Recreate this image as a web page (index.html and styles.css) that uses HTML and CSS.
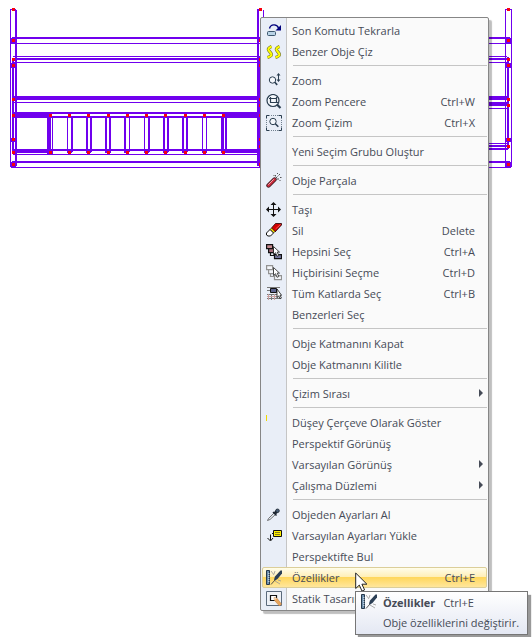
FILE: index.html
```html
<!DOCTYPE html>
<html lang="tr">
<head>
  <meta charset="UTF-8">
  <title>Obje Menüsü</title>
  <link rel="stylesheet" href="styles.css">
</head>
<body>
  <main class="workspace">
    <svg class="drawing" width="532" height="180" viewBox="0 0 532 180" aria-hidden="true">
      <!-- horizontal beams -->
      <g class="beams">
        <path d="M12 37h498v2H12zM12 43h498v1H12zM13 56h494v1H13zM13 58h495v2H13zM13 62h494v1H13z"/>
        <path d="M13 96h495v4H13zM13 102h248v1H13zM489 102h19v4h-19zM489 108h19v1h-19z"/>
        <path d="M13 112h248v2H13zM13 116h248v2H13zM13 112h38v6H13zM225 112h36v6h-36z"/>
        <path d="M13 149h248v2H13zM13 154h248v1H13zM13 149h38v4H13zM225 149h36v4h-36z"/>
        <path d="M489 143h19v1h-19zM489 145h19v2h-19zM489 148h19v2h-19z"/>
        <path d="M12 161h498v2H12zM11 167h500v1H11z"/>
      </g>
      <!-- posts -->
      <g class="beams">
        <path d="M10 9h1v158h-1zM10 9h6v1h-6zM15 10h2v156h-2zM12 60h2v92h-2z"/>
        <path d="M257 9h2v157h-2zM257 9h5v1h-5zM263 10h1v10h-1zM259 56h2v112h-2z"/>
        <path d="M505 9h1v158h-1zM505 9h7v1h-7zM511 10h1v157h-1zM507 57h2v92h-2z"/>
        <path d="M11 38h5v6h-5zM11 63h5v5h-5zM11 138h5v4h-5zM11 162h5v5h-5z"/>
        <path d="M506 38h5v6h-5zM506 63h5v5h-5zM506 138h5v4h-5zM506 162h5v5h-5z"/>
      </g>
      <!-- balusters -->
      <g class="beams">
        <path d="M47 116h4v38h-4zM52 116h1v38h-1zM67 116h1v36h-1zM71 116h2v36h-2zM86 116h2v36h-2zM90 116h2v36h-2z"/>
        <path d="M105 116h2v36h-2zM109 116h2v36h-2zM124 116h2v36h-2zM129 116h1v36h-1zM144 116h1v36h-1zM148 116h2v36h-2z"/>
        <path d="M163 116h2v36h-2zM167 116h2v36h-2zM182 116h2v36h-2zM186 116h2v36h-2zM202 116h1v36h-1zM206 116h1v36h-1z"/>
        <path d="M221 116h3v36h-3zM225 116h2v36h-2z"/>
        <path d="M67 151h5v2h-5zM86 151h5v2h-5zM105 151h6v2h-6zM124 151h5v2h-5zM144 151h5v2h-5zM163 151h5v2h-5zM182 151h5v2h-5zM202 151h5v2h-5zM221 151h5v2h-5z"/>
      </g>
      <!-- nodes -->
      <g class="nodes">
        <path d="M12 8h3v3h-3zM12 39h3v3h-3zM12 58h3v3h-3zM12 64h3v3h-3zM12 98h3v3h-3zM12 114h3v3h-3zM12 138h3v3h-3zM12 151h3v3h-3zM12 163h3v3h-3z"/>
        <path d="M259 8h3v3h-3zM259 39h3v3h-3zM259 58h3v3h-3zM259 64h3v3h-3zM259 98h3v3h-3zM259 104h3v3h-3zM259 114h3v3h-3zM259 138h3v3h-3zM259 145h3v3h-3zM259 163h3v3h-3z"/>
        <path d="M507 8h3v3h-3zM507 39h3v3h-3zM507 58h3v3h-3zM507 64h3v3h-3zM507 98h3v3h-3zM507 104h3v3h-3zM507 138h3v3h-3zM507 145h3v3h-3zM507 163h3v3h-3z"/>
        <path d="M49 114h3v3h-3zM68 114h3v3h-3zM87 114h3v3h-3zM107 114h3v3h-3zM126 114h3v3h-3zM145 114h3v3h-3zM164 114h3v3h-3zM184 114h3v3h-3zM203 114h3v3h-3zM222 114h3v3h-3z"/>
        <path d="M49 151h3v3h-3zM68 151h3v3h-3zM87 151h3v3h-3zM107 151h3v3h-3zM126 151h3v3h-3zM145 151h3v3h-3zM164 151h3v3h-3zM184 151h3v3h-3zM203 151h3v3h-3zM222 151h3v3h-3z"/>
      </g>
    </svg>

    <div class="menu" role="menu">
      <button class="item" role="menuitem">
        <svg class="icon" viewBox="0 0 16 16"><rect x="1.5" y="8.5" width="8" height="4" rx="1" fill="#b9d3e6" stroke="#3c566e"/><path d="M3.500 5.500C4.500 1 11 .5 12.500 5" fill="none" stroke="#00007c" stroke-width="1.400"/><path d="M15 2V7.500H9.500z" fill="#00007c"/></svg>
        <span class="label">Son Komutu Tekrarla</span>
      </button>
      <button class="item" role="menuitem">
        <svg class="icon" viewBox="0 0 16 16"><g fill="none"><path d="M5.500 2.500C1 4.500 2 6 4 8s2.500 4-2.500 5.500M13.500 2.500C9 4.500 10 6 12 8s2.500 4-2.500 5.500" stroke="#77772a" stroke-width="3.200"/><path d="M5.500 2.500C1 4.500 2 6 4 8s2.500 4-2.500 5.500M13.500 2.500C9 4.500 10 6 12 8s2.500 4-2.500 5.500" stroke="#ffff00" stroke-width="2"/></g></svg>
        <span class="label">Benzer Obje Çiz</span>
      </button>
      <hr class="separator">
      <button class="item" role="menuitem">
        <svg class="icon" viewBox="0 0 16 16"><g fill="none" stroke="#2b3e50"><circle cx="6.500" cy="7" r="3.200" fill="#f5f8fc"/><path d="M8.800 9.300l2.400 2.600" stroke-width="1.600"/><path d="M12.500 1v7"/></g><path d="M12.500 0l2 2.500h-4zM12.500 9l2-2.500h-4z" fill="#2b3e50"/></svg>
        <span class="label">Zoom</span>
      </button>
      <button class="item" role="menuitem">
        <svg class="icon" viewBox="0 0 16 16"><g fill="none" stroke="#2b3e50"><circle cx="7" cy="6.500" r="6" fill="#f5f8fc" stroke-width="1.200"/><path d="M4.500 4.500h6v4h-6zM3 4.500h1M10.500 8.500h1.500M4.500 3v1M10.500 3v1" stroke-width="1.200"/><path d="M11 10.500l3.500 3.500" stroke-width="2.200"/></g></svg>
        <span class="label">Zoom Pencere</span><kbd class="shortcut">Ctrl+W</kbd>
      </button>
      <button class="item" role="menuitem">
        <svg class="icon" viewBox="0 0 16 16"><g fill="none" stroke="#2b3e50"><path d="M.5 3.500v-3h3M12.500.5h3v3M15.500 12.500v3h-3M3.500 15.500h-3v-3"/><path d="M5 .5h7M5 15.500h7M.5 5v7M15.500 5v7" stroke-dasharray="1 1" stroke="#71808e"/><circle cx="7" cy="6.500" r="3.200" fill="#f5f8fc"/><path d="M9.300 8.800l3 3" stroke-width="1.600"/></g></svg>
        <span class="label">Zoom Çizim</span><kbd class="shortcut">Ctrl+X</kbd>
      </button>
      <hr class="separator">
      <button class="item" role="menuitem">
        <span class="icon"></span>
        <span class="label">Yeni Seçim Grubu Oluştur</span>
      </button>
      <hr class="separator">
      <button class="item" role="menuitem">
        <svg class="icon" viewBox="0 0 16 16"><g fill="none" stroke-linecap="round"><path d="M2.500 12.500l6-6" stroke="#3c1a22" stroke-width="4.400"/><path d="M2.500 12.500l6-6" stroke="#c92c3c" stroke-width="2.800"/><path d="M2.500 11.500l5-5" stroke="#f0a6ac"/></g><path d="M10 5l1.500-1.500M11 6h2M12.500 2.500L14 1M9.500 3.500V2M14 4.500h1.500M11.500 1V0M13.500 7l1 1M7.500 2l1 1" stroke="#555"/></svg>
        <span class="label">Obje Parçala</span>
      </button>
      <hr class="separator">
      <button class="item" role="menuitem">
        <svg class="icon" viewBox="0 0 16 16"><path d="M7.500 1v13M1 7.500h13" stroke="#111"/><path d="M7.500 0l3 3h-6zM7.500 15l3-3h-6zM0 7.500l3-3v6zM15 7.500l-3-3v6z" fill="#111"/></svg>
        <span class="label">Taşı</span>
      </button>
      <button class="item" role="menuitem">
        <svg class="icon" viewBox="0 0 16 16"><path d="M9.500.5h6v1.500L9 9 5.500 5z" fill="#d00000" stroke="#200" stroke-width=".8"/><path d="M9.500 6L14.500 1.500" stroke="#ff5252"/><path d="M5.500 5L9 8.500 7.500 10 4 6.500z" fill="#ffe800" stroke="#111" stroke-width=".6"/><path d="M4 6.500L.5 10v2l1.500 1h2.500l3-3z" fill="#fff" stroke="#111"/></svg>
        <span class="label">Sil</span><kbd class="shortcut">Delete</kbd>
      </button>
      <button class="item" role="menuitem">
        <svg class="icon" viewBox="0 0 16 16"><g stroke="#111" stroke-width="1.200"><path d="M.6.600h6v4h-6z" fill="#c48990"/><path d="M2.600 4.600h5v4h-5z" fill="#a56b78"/><path d="M4.500 8.600v2.900H8" fill="none"/><path d="M8.500 10.600h7v4h-7z" fill="#77779f"/></g><path d="M7.500 2.500v8l2-1.800 1.500 3.600 1.800-.8-1.600-3.400h2.300z" fill="#fff" stroke="#111" stroke-width=".8"/></svg>
        <span class="label">Hepsini Seç</span><kbd class="shortcut">Ctrl+A</kbd>
      </button>
      <button class="item" role="menuitem">
        <svg class="icon" viewBox="0 0 16 16"><g stroke="#929292" stroke-width="1.200" fill="#f4f6fa"><path d="M.6.600h6v4h-6z"/><path d="M2.600 4.600h5v4h-5z"/><path d="M4.500 8.600v2.900H8" fill="none"/><path d="M8.500 10.600h7v4h-7z"/></g><path d="M7.500 2.500v8l2-1.800 1.500 3.600 1.800-.8-1.600-3.400h2.300z" fill="#fff" stroke="#222" stroke-width=".8"/></svg>
        <span class="label">Hiçbirisini Seçme</span><kbd class="shortcut">Ctrl+D</kbd>
      </button>
      <button class="item" role="menuitem">
        <svg class="icon" viewBox="0 0 16 16"><path d="M1 1.500h13M1 4.500h3M1 8.500h11M1 12.500h13M5.500 8v6M11.500 9v4" stroke="#777"/><path d="M2.500 8v6M8.500 8v6M1 10.500h10" stroke="#c9a0a0"/><path d="M4.500 2.500h6v4h-6z" fill="#5d648f" stroke="#111"/><path d="M11 3v8.500l1.700-1.700 1.300 3 1.400-.7-1.300-2.800h1.500z" fill="#fff" stroke="#111" stroke-width=".8"/></svg>
        <span class="label">Tüm Katlarda Seç</span><kbd class="shortcut">Ctrl+B</kbd>
      </button>
      <button class="item" role="menuitem">
        <span class="icon"></span>
        <span class="label">Benzerleri Seç</span>
      </button>
      <hr class="separator">
      <button class="item" role="menuitem">
        <span class="icon"></span>
        <span class="label">Obje Katmanını Kapat</span>
      </button>
      <button class="item" role="menuitem">
        <span class="icon"></span>
        <span class="label">Obje Katmanını Kilitle</span>
      </button>
      <hr class="separator">
      <button class="item has-submenu" role="menuitem" aria-haspopup="true">
        <span class="icon"></span>
        <span class="label">Çizim Sırası</span>
      </button>
      <hr class="separator">
      <button class="item" role="menuitem">
        <svg class="icon" viewBox="0 0 16 16"><path d="M0 0h1v6H0z" fill="#f0d800"/></svg>
        <span class="label">Düşey Çerçeve Olarak Göster</span>
      </button>
      <button class="item" role="menuitem">
        <span class="icon"></span>
        <span class="label">Perspektif Görünüş</span>
      </button>
      <button class="item has-submenu" role="menuitem" aria-haspopup="true">
        <span class="icon"></span>
        <span class="label">Varsayılan Görünüş</span>
      </button>
      <button class="item has-submenu" role="menuitem" aria-haspopup="true">
        <span class="icon"></span>
        <span class="label">Çalışma Düzlemi</span>
      </button>
      <hr class="separator">
      <button class="item" role="menuitem">
        <svg class="icon" viewBox="0 0 16 16"><path d="M1.500 13.500l1-2L8 6l1.500 1.500L4 12.500z" fill="#dfe6ee" stroke="#555" stroke-width=".8"/><path d="M7 5l3.500 3.500" stroke="#1c2530" stroke-width="1.400"/><path d="M8.800 6.500l3.200-3.500" stroke="#1c2530" stroke-width="3"/><circle cx="11.500" cy="3.800" r="1.800" fill="#4a6078" stroke="#1c2530" stroke-width=".8"/></svg>
        <span class="label">Objeden Ayarları Al</span>
      </button>
      <button class="item" role="menuitem">
        <svg class="icon" viewBox="0 0 16 16"><path d="M7.500 2.500h8v6h-8z" fill="#ffee00" stroke="#111"/><path d="M9 4.500h5M9 6.500h5" stroke="#333" stroke-width=".6"/><path d="M7 5.500H6M4.500 6.500V12" fill="none" stroke="#111"/><path d="M1.500 10l3 3 2.500-3" fill="none" stroke="#111"/></svg>
        <span class="label">Varsayılan Ayarları Yükle</span>
      </button>
      <button class="item" role="menuitem">
        <span class="icon"></span>
        <span class="label">Perspektifte Bul</span>
      </button>
      <button class="item active" role="menuitem" aria-describedby="tip">
        <svg class="icon" viewBox="0 0 16 16"><path d="M.5.5h3v14h-3z" fill="#6f90ae" stroke="#26394c"/><path d="M2 3.500h1.500M2 5.500h1.500M2 7.500h1.500M2 9.500h1.500M2 11.500h1.500" stroke="#e1e9f0" stroke-width=".7"/><path d="M5 1l3 4M9 11l5 3M9 1l-1 3M12 10l3 1" stroke="#999" stroke-width=".8"/><path d="M5 14.500L9 10" stroke="#444" stroke-width=".9"/><path d="M8 9.500l1-3L14.500.5H16v3L11.500 9 9 10.500z" fill="#2b3f55"/></svg>
        <span class="label">Özellikler</span><kbd class="shortcut">Ctrl+E</kbd>
      </button>
      <button class="item" role="menuitem">
        <svg class="icon" viewBox="0 0 16 16"><path d="M.5.5h15v14H.5z" fill="#eef1f6" stroke="#5b6a7c"/><path d="M4.500 4.500h6v5h-6z" fill="#fff" stroke="#111" stroke-width="1.200"/><path d="M8 6.500l3 .8 4.500 5.700-2 2L8.500 9.500z" fill="#e8a55c" stroke="#b8743a" stroke-width=".5"/><path d="M8 6.500l3 .8-2.500 2z" fill="#f4d9b8"/></svg>
        <span class="label">Statik Tasarım</span>
      </button>
    </div>

    <svg class="cursor" width="14" height="20" viewBox="0 0 14 20" aria-hidden="true"><path d="M.7 1v15.500l3.600-3.400 2.700 6 2.600-1.200-2.700-5.700h5z" fill="#fff" stroke="#222"/></svg>

    <div class="tooltip" id="tip" role="tooltip">
      <svg class="icon" viewBox="0 0 16 16"><path d="M.5.5h3v14h-3z" fill="#6f90ae" stroke="#26394c"/><path d="M2 3.500h1.500M2 5.500h1.500M2 7.500h1.500M2 9.500h1.500M2 11.500h1.500" stroke="#e1e9f0" stroke-width=".7"/><path d="M5 1l3 4M9 11l5 3M9 1l-1 3M12 10l3 1" stroke="#999" stroke-width=".8"/><path d="M5 14.500L9 10" stroke="#444" stroke-width=".9"/><path d="M8 9.500l1-3L14.500.5H16v3L11.500 9 9 10.500z" fill="#2b3f55"/></svg>
      <div class="tooltip-title"><strong>Özellikler</strong><span>Ctrl+E</span></div>
      <div class="tooltip-text">Obje özelliklerini değiştirir.</div>
    </div>
  </main>
</body>
</html>
```
FILE: styles.css
```css
body {
  margin: 0;
  background: #fff;
  color: #464b57;
  font-family: "Open Sans", "Noto Sans", sans-serif;
  font-size: 11px;
}

.workspace {
  position: relative;
  min-height: 100vh;
  overflow: hidden;
}

/* drawing */
.drawing {
  display: block;
  shape-rendering: crispEdges;
}
.beams {
  fill: #7000ee;
}
.nodes {
  fill: #f8000f;
}

/* context menu */
.menu {
  position: absolute;
  left: 260px;
  top: 17px;
  box-sizing: border-box;
  width: 229px;
  padding: 2px 1px 1px;
  border: 1px solid #868686;
  border-radius: 2px;
  background: linear-gradient(to right, #e9eef7 25px, #c5c5c5 25px, #c5c5c5 26px, #fafafa 26px);
  box-shadow: 3px 3px 1px rgba(0, 0, 0, 0.25);
}
.item {
  display: flex;
  align-items: center;
  gap: 10px;
  box-sizing: border-box;
  width: 100%;
  height: 21px;
  padding: 0 11px 0 3px;
  border: 1px solid transparent;
  border-radius: 2px;
  background: none;
  color: inherit;
  font: inherit;
  text-align: left;
  white-space: nowrap;
}
.icon {
  display: block;
  flex: none;
  width: 16px;
  height: 16px;
}
.label {
  flex: 1;
}
.shortcut {
  font: inherit;
}
.item.active {
  border-color: #dbce99;
  background: linear-gradient(#fffdea, #ffeeb5 48%, #ffd75c 50%, #ffe69c);
}
.has-submenu {
  padding-right: 3px;
}
.has-submenu::after {
  content: "";
  margin-bottom: 2px;
  border: 4px solid transparent;
  border-left-color: #464b57;
  border-right: 0;
}
.separator {
  height: 1px;
  margin: 3px 0 4px 31px;
  border: 0;
  background: #c5c5c5;
}

.cursor {
  position: absolute;
  left: 355px;
  top: 572px;
}

/* tooltip */
.tooltip {
  position: absolute;
  left: 355px;
  top: 591px;
  display: grid;
  grid-template-columns: 16px auto;
  column-gap: 6px;
  row-gap: 2px;
  padding: 2px 8px 2px 5px;
  border: 1px solid #767676;
  background: linear-gradient(#fff, #e4e8f3);
  box-shadow: 3px 4px 1px rgba(0, 0, 0, 0.4);
  line-height: 18px;
  white-space: nowrap;
}
.tooltip-title {
  display: flex;
  gap: 8px;
}
.tooltip-text {
  grid-column: 2;
}
```
